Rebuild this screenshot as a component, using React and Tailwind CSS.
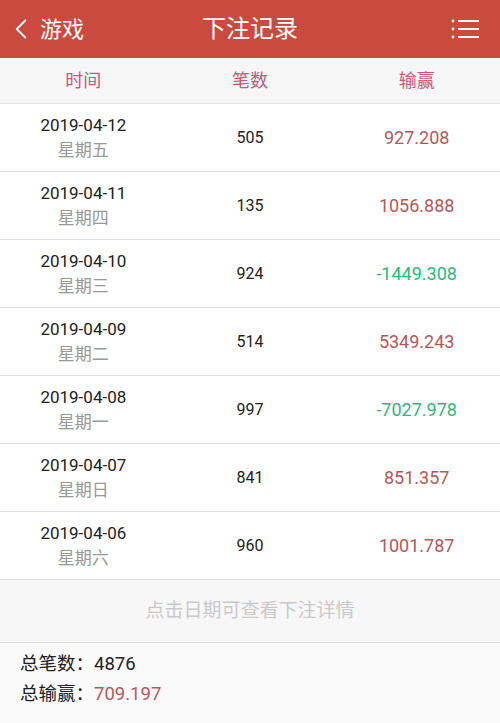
import { ChevronLeft } from 'lucide-react';

const records = [
  { date: '2019-04-12', weekday: '星期五', count: 505, amount: '927.208' },
  { date: '2019-04-11', weekday: '星期四', count: 135, amount: '1056.888' },
  { date: '2019-04-10', weekday: '星期三', count: 924, amount: '-1449.308' },
  { date: '2019-04-09', weekday: '星期二', count: 514, amount: '5349.243' },
  { date: '2019-04-08', weekday: '星期一', count: 997, amount: '-7027.978' },
  { date: '2019-04-07', weekday: '星期日', count: 841, amount: '851.357' },
  { date: '2019-04-06', weekday: '星期六', count: 960, amount: '1001.787' },
];

function MenuIcon() {
  return (
    <svg width="30" height="22" viewBox="0 0 30 22" fill="none">
      <circle cx="2" cy="3" r="1.4" fill="#fff" />
      <circle cx="2" cy="11" r="1.4" fill="#fff" />
      <circle cx="2" cy="19" r="1.4" fill="#fff" />
      <path d="M7 3h21M7 11h21M7 19h21" stroke="#fff" strokeWidth="2" />
    </svg>
  );
}

export default function App() {
  return (
    <div
      className="w-[500px] h-[723px] bg-[#fafafa] overflow-hidden"
      style={{ fontFamily: 'Roboto, "Noto Sans CJK SC", sans-serif' }}
    >
      {/* Header */}
      <div className="h-[58px] bg-[#cb4a40] flex items-center px-3 relative text-white">
        <div className="flex items-center z-10">
          <ChevronLeft size={34} strokeWidth={1.3} className="-ml-2" />
          <span className="text-[22px] ml-[2px]">游戏</span>
        </div>
        <div className="absolute inset-0 flex items-center justify-center text-[24px]">下注记录</div>
        <div className="ml-auto mr-[7px] z-10">
          <MenuIcon />
        </div>
      </div>

      {/* Column titles */}
      <div className="h-[46px] bg-[#f6f6f6] grid grid-cols-3 items-center text-[18px] text-[#c9577a] border-b border-[#e2e2e2]">
        <div className="text-center">时间</div>
        <div className="text-center">笔数</div>
        <div className="text-center">输赢</div>
      </div>

      {/* Rows */}
      <div className="bg-white">
        {records.map((r) => (
          <div key={r.date} className="h-[68px] grid grid-cols-3 items-center border-b border-[#dedede]">
            <div className="text-center leading-[25px]">
              <div className="text-[17px] text-[#222]">{r.date}</div>
              <div className="text-[17px] text-[#999]">{r.weekday}</div>
            </div>
            <div className="text-center text-[16px] text-[#222]">{r.count}</div>
            <div
              className={
                'text-center text-[18px] ' +
                (r.amount.startsWith('-') ? 'text-[#2fb77d]' : 'text-[#b5575a]')
              }
            >
              {r.amount}
            </div>
          </div>
        ))}
      </div>

      {/* Hint */}
      <div className="h-[63px] bg-[#f7f7f7] flex items-center justify-center text-[19px] text-[#cacaca] border-b border-[#dcdcdc]">
        点击日期可查看下注详情
      </div>

      {/* Totals */}
      <div className="px-5 pt-[6px] text-[18.5px] leading-[30px] text-[#222]">
        <div>总笔数：4876</div>
        <div>
          总输赢：<span className="text-[#b5575a]">709.197</span>
        </div>
      </div>
    </div>
  );
}
